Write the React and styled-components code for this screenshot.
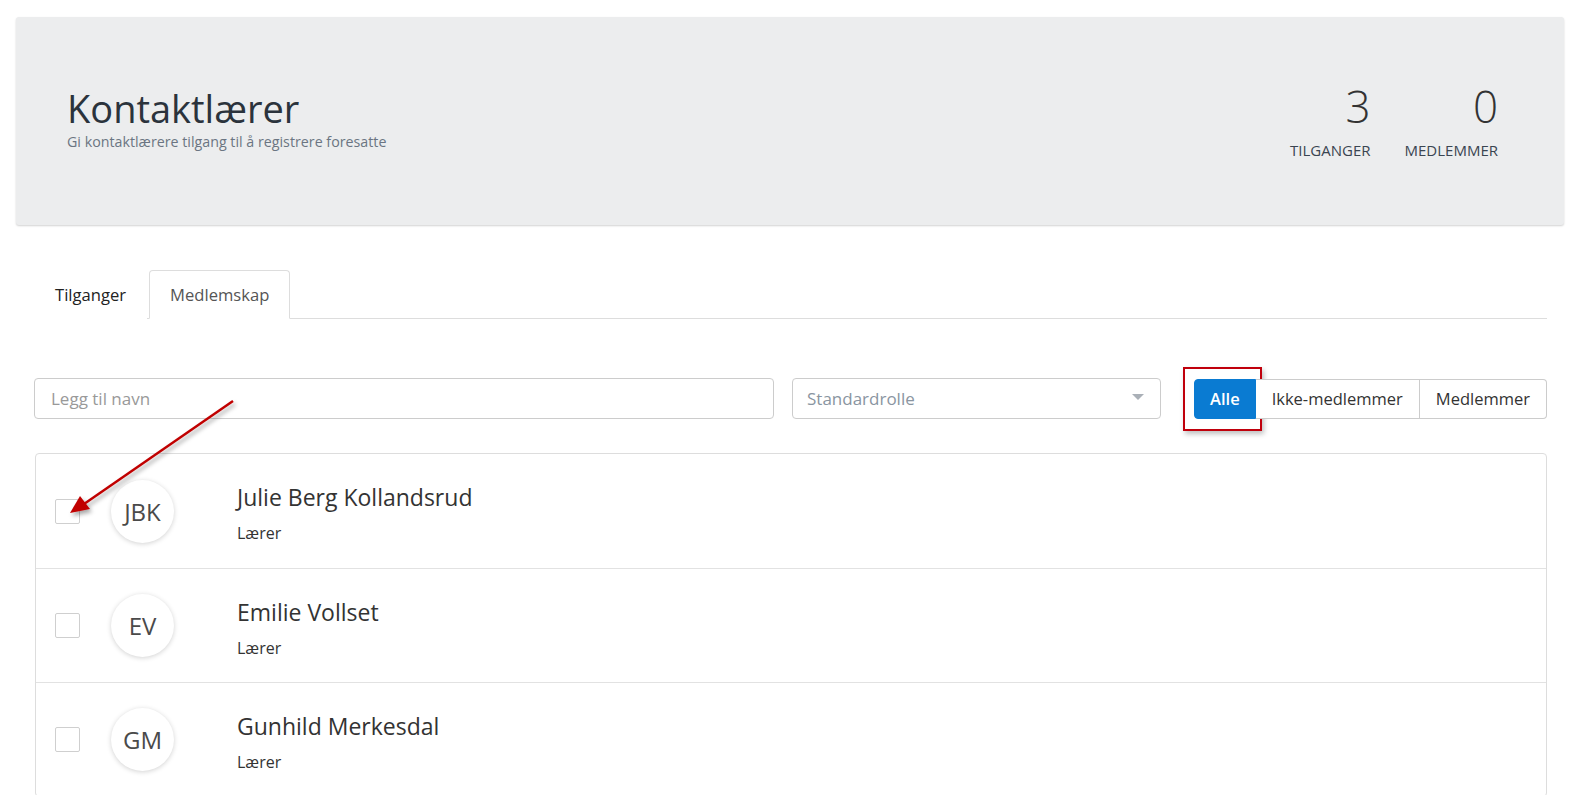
import React from 'react'
import styled, { createGlobalStyle } from 'styled-components'

const GlobalStyle = createGlobalStyle`
  html, body {
    margin: 0;
    padding: 0;
    background: #fff;
    overflow: hidden;
  }
  body {
    font-family: "Open Sans", "Noto Sans", "Liberation Sans", sans-serif;
    color: #333;
  }
  * { box-sizing: border-box; }
`

const people = [
  { initials: 'JBK', name: 'Julie Berg Kollandsrud', role: 'Lærer' },
  { initials: 'EV', name: 'Emilie Vollset', role: 'Lærer' },
  { initials: 'GM', name: 'Gunhild Merkesdal', role: 'Lærer' },
]

const Page = styled.div`
  position: relative;
  padding: 17px 18px 0 16px;
`

const Hero = styled.header`
  height: 208px;
  background: #ecedee;
  border-radius: 3px;
  box-shadow: 0 1px 2px rgba(0, 0, 0, 0.18);
  display: flex;
  align-items: center;
  justify-content: space-between;
  padding: 0 66px 0 51px;
`

const TitleBlock = styled.div`
  margin-top: -5px;
`

const Title = styled.h1`
  margin: 0;
  font-size: 38px;
  font-weight: 400;
  line-height: 44px;
  color: #2b333c;
`

const Subtitle = styled.p`
  margin: 3px 0 0;
  font-size: 14.25px;
  line-height: 18px;
  color: #6b7582;
`

const Stats = styled.div`
  display: flex;
  gap: 34px;
`

const Stat = styled.div`
  display: flex;
  flex-direction: column;
  align-items: flex-end;
`

const StatValue = styled.span`
  font-size: 44px;
  font-weight: 300;
  line-height: 50px;
  color: #333;
`

const StatLabel = styled.span`
  margin-top: 8px;
  font-size: 15px;
  line-height: 22px;
  color: #3a4551;
  text-transform: uppercase;
`

const Content = styled.main`
  padding: 0 17px 0 18px;
`

const Tabs = styled.nav`
  display: flex;
  margin-top: 45px;
  border-bottom: 1px solid #ddd;
  height: 49px;
`

const Tab = styled.div`
  padding: 0 20px;
  margin-right: 2px;
  display: flex;
  align-items: center;
  font-size: 16.6px;
  color: ${p => (p.$active ? '#555' : '#222')};
  border: 1px solid ${p => (p.$active ? '#ddd' : 'transparent')};
  border-bottom: ${p => (p.$active ? '1px solid #fff' : '1px solid transparent')};
  border-radius: 4px 4px 0 0;
  background: #fff;
  margin-bottom: -1px;
`

const Filters = styled.div`
  display: flex;
  align-items: center;
  margin-top: 59px;
`

const SearchInput = styled.input`
  width: 740px;
  height: 41px;
  border: 1px solid #ccc;
  border-radius: 4px;
  padding: 0 16px;
  font-family: inherit;
  font-size: 17px;
  color: #333;
  &::placeholder { color: #999; }
`

const Select = styled.div`
  width: 369px;
  height: 41px;
  margin-left: 18px;
  border: 1px solid #ccc;
  border-radius: 4px;
  padding: 0 14px;
  display: flex;
  align-items: center;
  justify-content: space-between;
  font-size: 17px;
  color: #8a95a1;
`

const Caret = styled.span`
  width: 0;
  height: 0;
  border-left: 6px solid transparent;
  border-right: 6px solid transparent;
  border-top: 6px solid #aab0b7;
  margin-top: -4px;
  margin-right: 2px;
`

const ButtonGroup = styled.div`
  display: flex;
  margin-left: auto;
  height: 40px;
`

const GroupButton = styled.button`
  position: relative;
  height: 40px;
  padding: 0 ${p => p.$pad}px;
  font-family: inherit;
  font-size: 16.5px;
  font-weight: ${p => (p.$active ? 600 : 400)};
  color: ${p => (p.$active ? '#fff' : '#333')};
  background: ${p => (p.$active ? '#0a7bd2' : '#fff')};
  border: 1px solid ${p => (p.$active ? '#0a7bd2' : '#ccc')};
  border-left-width: ${p => (p.$first ? '1px' : '0')};
  border-radius: ${p => (p.$first ? '4px 0 0 4px' : p.$last ? '0 4px 4px 0' : '0')};
  cursor: pointer;
`

const Highlight = styled.span`
  position: absolute;
  left: -12px;
  top: -13px;
  width: 79px;
  height: 64px;
  border: 2px solid #c0000c;
  box-shadow: 2px 3px 5px rgba(0, 0, 0, 0.25);
  pointer-events: none;
`

const List = styled.ul`
  list-style: none;
  margin: 34px 0 0 1px;
  padding: 0;
  border: 1px solid #ddd;
  border-radius: 4px;
`

const Row = styled.li`
  height: 114px;
  display: flex;
  align-items: center;
  padding: 0 19px;
  border-top: ${p => (p.$first ? 'none' : '1px solid #e2e2e2')};
`

const Check = styled.span`
  width: 25px;
  height: 25px;
  border: 1px solid #cfcfcf;
  border-radius: 2px;
  background: #fff;
`

const Avatar = styled.div`
  width: 63px;
  height: 63px;
  margin-left: 31px;
  border-radius: 50%;
  background: #fff;
  box-shadow: 0 1px 5px rgba(0, 0, 0, 0.18);
  display: flex;
  align-items: center;
  justify-content: center;
  font-size: 24px;
  color: #4a4a4a;
`

const Info = styled.div`
  margin-left: 63px;
  padding-top: 4px;
`

const Name = styled.div`
  font-size: 23px;
  line-height: 30px;
  color: #333;
`

const Role = styled.div`
  margin-top: 10px;
  font-size: 16px;
  line-height: 22px;
  color: #333;
`

const ArrowLayer = styled.svg`
  position: absolute;
  left: 0;
  top: 0;
  width: 300px;
  height: 560px;
  pointer-events: none;
  overflow: visible;
`

const Arrow = () => (
  <ArrowLayer viewBox="0 0 300 560">
    <defs>
      <filter id="arrowShadow" x="-20%" y="-20%" width="140%" height="140%">
        <feDropShadow dx="2" dy="3" stdDeviation="2" floodColor="#000" floodOpacity="0.35" />
      </filter>
    </defs>
    <g filter="url(#arrowShadow)">
      <line x1="233" y1="401" x2="84" y2="504" stroke="#c00000" strokeWidth="2.5" />
      <polygon points="70,513 80,496 90,509" fill="#c00000" />
    </g>
  </ArrowLayer>
)

export default function App() {
  return (
    <>
      <GlobalStyle />
      <Page>
        <Hero>
          <TitleBlock>
            <Title>Kontaktlærer</Title>
            <Subtitle>Gi kontaktlærere tilgang til å registrere foresatte</Subtitle>
          </TitleBlock>
          <Stats>
            <Stat>
              <StatValue>3</StatValue>
              <StatLabel>Tilganger</StatLabel>
            </Stat>
            <Stat>
              <StatValue>0</StatValue>
              <StatLabel>Medlemmer</StatLabel>
            </Stat>
          </Stats>
        </Hero>

        <Content>
          <Tabs>
            <Tab>Tilganger</Tab>
            <Tab $active>Medlemskap</Tab>
          </Tabs>

          <Filters>
            <SearchInput placeholder="Legg til navn" />
            <Select>
              Standardrolle
              <Caret />
            </Select>
            <ButtonGroup>
              <GroupButton $active $first $pad={15}>
                Alle
                <Highlight />
              </GroupButton>
              <GroupButton $pad={16}>Ikke-medlemmer</GroupButton>
              <GroupButton $last $pad={16}>Medlemmer</GroupButton>
            </ButtonGroup>
          </Filters>

          <List>
            {people.map((p, i) => (
              <Row key={p.initials} $first={i === 0}>
                <Check />
                <Avatar>{p.initials}</Avatar>
                <Info>
                  <Name>{p.name}</Name>
                  <Role>{p.role}</Role>
                </Info>
              </Row>
            ))}
          </List>
        </Content>
        <Arrow />
      </Page>
    </>
  )
}
